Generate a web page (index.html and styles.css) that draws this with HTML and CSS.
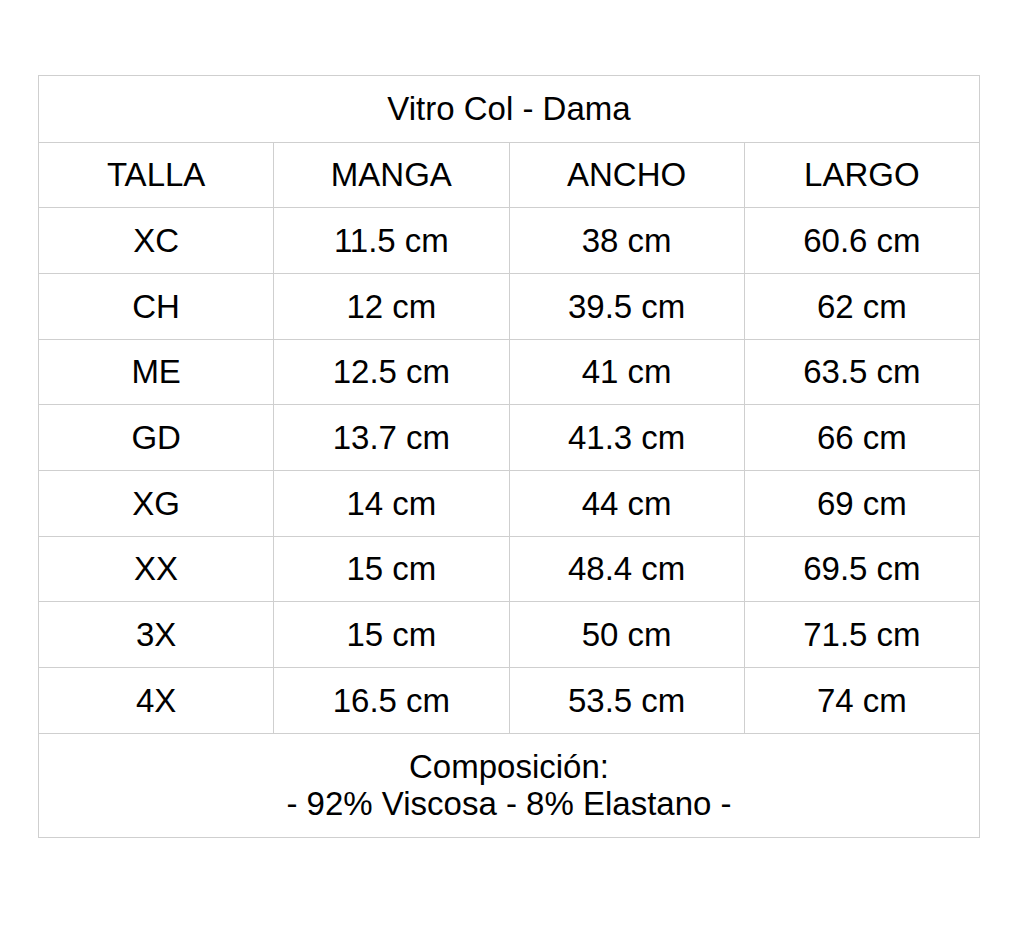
FILE: index.html
```html
<!DOCTYPE html>
<html lang="es">
<head>
<meta charset="utf-8">
<title>Vitro Col - Dama</title>
<link rel="stylesheet" href="styles.css">
</head>
<body>
<table class="size-table">
  <tr><td class="title" colspan="4">Vitro Col - Dama</td></tr>
  <tr class="head"><td>TALLA</td><td>MANGA</td><td>ANCHO</td><td>LARGO</td></tr>
  <tr><td>XC</td><td>11.5 cm</td><td>38 cm</td><td>60.6 cm</td></tr>
  <tr><td>CH</td><td>12 cm</td><td>39.5 cm</td><td>62 cm</td></tr>
  <tr><td>ME</td><td>12.5 cm</td><td>41 cm</td><td>63.5 cm</td></tr>
  <tr><td>GD</td><td>13.7 cm</td><td>41.3 cm</td><td>66 cm</td></tr>
  <tr><td>XG</td><td>14 cm</td><td>44 cm</td><td>69 cm</td></tr>
  <tr><td>XX</td><td>15 cm</td><td>48.4 cm</td><td>69.5 cm</td></tr>
  <tr><td>3X</td><td>15 cm</td><td>50 cm</td><td>71.5 cm</td></tr>
  <tr><td>4X</td><td>16.5 cm</td><td>53.5 cm</td><td>74 cm</td></tr>
  <tr><td class="foot" colspan="4">Composición:<br>- 92% Viscosa - 8% Elastano -</td></tr>
</table>
</body>
</html>
```
FILE: styles.css
```css
html, body {
  margin: 0;
  padding: 0;
  background: #fff;
}
body {
  padding: 75px 0 0 38px;
  font-family: "Liberation Sans", Arial, sans-serif;
  color: #000;
}
.size-table {
  border-collapse: collapse;
  width: 942px;
  table-layout: fixed;
  font-size: 33px;
}
.size-table td {
  border: 1px solid #cfcfcf;
  text-align: center;
  vertical-align: middle;
  height: 64.7px;
  padding: 0;
  line-height: 37px;
}
.size-table td.title {
  height: 65.5px;
}
.size-table td.foot {
  height: 103px;
}
```
